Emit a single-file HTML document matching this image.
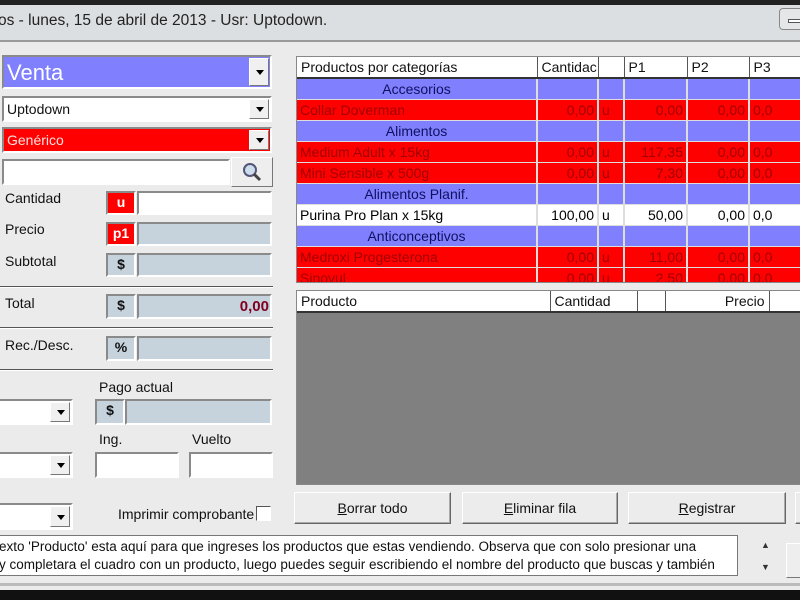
<!DOCTYPE html>
<html><head><meta charset="utf-8"><style>
*{margin:0;padding:0;box-sizing:border-box}
body{width:800px;height:600px;overflow:hidden;background:#ebebeb;font-family:"Liberation Sans",sans-serif;font-size:14px;color:#111;position:relative}
.a{position:absolute}
.in{position:absolute;border:2px solid;border-color:#8a8a8a #fff #fff #8a8a8a;background:#fff}
.dd{position:absolute;top:1px;right:1px;bottom:1px;width:20px;background:#f0f0f0;border:1px solid;border-color:#fff #777 #777 #fff}
.dd:after{content:"";position:absolute;left:6px;top:50%;margin-top:-2px;border:4px solid transparent;border-top:5px solid #000;border-bottom:0}
.bx{position:absolute;border:2px solid;border-color:#8a8a8a #fff #fff #8a8a8a;font-weight:bold;text-align:center;line-height:19px}
.hr{position:absolute;left:0;width:273px;height:2px;background:#555;border-bottom:1px solid #fff}
.lb{position:absolute;font-size:14px}
table{border-collapse:collapse;font-size:14px}
td{height:21px;padding:0 3px;border-right:2px solid #ddd;border-bottom:1px solid #ddd;white-space:nowrap;overflow:hidden}
.c td{background:#8080ff;color:#101060}
.r td{background:#f00;color:#a00000}
.w td{background:#fff;color:#000}
.n{text-align:right}
th{height:21px;font-weight:normal;text-align:left;padding:0 4px;background:#fff;border-right:1px solid #555;border-bottom:2px solid #333}
.btn{position:absolute;top:492px;height:32px;background:#ececec;border:1px solid;border-color:#fff #666 #666 #fff;box-shadow:inset -1px -1px #aaa;text-align:center;line-height:30px;font-size:14px}
</style></head><body>
<div class="a" style="left:0;top:0;width:800px;height:5px;background:#222"></div>
<div class="a" style="left:0;top:5px;width:800px;height:37px;background:#dcdfe1;border-bottom:2px solid #9a9a9a"></div>
<div class="a" style="left:-2px;top:12px;font-size:15.5px;color:#222">os - lunes, 15 de abril de 2013 - Usr: Uptodown.</div>
<div class="a" style="left:779px;top:8px;width:30px;height:22px;border:1px solid #888;border-radius:4px;background:#e4e6e8"><div class="a" style="left:8px;top:10px;width:14px;height:4px;border:1px solid #555;background:#fff"></div></div>

<div class="in" style="left:2px;top:55px;width:270px;height:34px;background:#8080ff"><span class="a" style="left:3px;top:3px;font-size:22px;color:#fff">Venta</span><div class="dd"></div></div>
<div class="in" style="left:2px;top:96px;width:270px;height:26px"><span class="a" style="left:3px;top:3px">Uptodown</span><div class="dd"></div></div>
<div class="in" style="left:2px;top:127px;width:270px;height:26px;background:#f00"><span class="a" style="left:3px;top:3px;color:#ffe0e0">Genérico</span><div class="dd"></div></div>
<div class="in" style="left:2px;top:159px;width:228px;height:26px"></div>
<div class="a" style="left:231px;top:157px;width:42px;height:30px;background:#eee;border:1px solid;border-color:#fff #777 #777 #fff">
<svg width="40" height="28"><circle cx="18" cy="12" r="6" fill="#cde" stroke="#557" stroke-width="2"/><line x1="22" y1="16" x2="28" y2="22" stroke="#444" stroke-width="3"/></svg></div>

<div class="lb" style="left:5px;top:190px">Cantidad</div>
<div class="bx" style="left:106px;top:191px;width:30px;height:24px;background:#f00;color:#fff">u</div>
<div class="in" style="left:137px;top:191px;width:135px;height:24px"></div>
<div class="lb" style="left:5px;top:221px">Precio</div>
<div class="bx" style="left:106px;top:222px;width:30px;height:24px;background:#f00;color:#fff">p1</div>
<div class="in" style="left:137px;top:222px;width:135px;height:24px;background:#c6d3dd"></div>
<div class="lb" style="left:5px;top:253px">Subtotal</div>
<div class="bx" style="left:106px;top:253px;width:30px;height:24px;background:#c6d3dd">$</div>
<div class="in" style="left:137px;top:253px;width:135px;height:24px;background:#c6d3dd"></div>
<div class="hr" style="top:286px"></div>
<div class="lb" style="left:5px;top:295px">Total</div>
<div class="bx" style="left:106px;top:294px;width:30px;height:25px;background:#c6d3dd">$</div>
<div class="in" style="left:137px;top:294px;width:135px;height:25px;background:#c6d3dd"><span class="a" style="right:1px;top:2px;font-weight:bold;color:#800020;font-size:15px">0,00</span></div>
<div class="hr" style="top:327px"></div>
<div class="lb" style="left:5px;top:337px">Rec./Desc.</div>
<div class="bx" style="left:106px;top:336px;width:30px;height:25px;background:#c6d3dd">%</div>
<div class="in" style="left:137px;top:336px;width:135px;height:25px;background:#c6d3dd"></div>
<div class="hr" style="top:369px"></div>
<div class="lb" style="left:99px;top:379px">Pago actual</div>
<div class="in" style="left:-4px;top:399px;width:77px;height:26px"><div class="dd"></div></div>
<div class="bx" style="left:95px;top:399px;width:30px;height:26px;background:#c6d3dd">$</div>
<div class="in" style="left:125px;top:399px;width:147px;height:26px;background:#c6d3dd"></div>
<div class="lb" style="left:99px;top:431px">Ing.</div>
<div class="lb" style="left:192px;top:431px">Vuelto</div>
<div class="in" style="left:-4px;top:452px;width:77px;height:26px"><div class="dd"></div></div>
<div class="in" style="left:95px;top:452px;width:84px;height:26px"></div>
<div class="in" style="left:189px;top:452px;width:84px;height:26px"></div>
<div class="in" style="left:-4px;top:503px;width:77px;height:27px"><div class="dd"></div></div>
<div class="lb" style="left:118px;top:506px">Imprimir comprobante</div>
<div class="a" style="left:256px;top:506px;width:15px;height:15px;border:1px solid #555;border-right-color:#fff;border-bottom-color:#fff;background:#fff"></div>

<div class="a" style="left:296px;top:56px;width:510px;height:227px;border:1px solid #888;background:#ececec;overflow:hidden">
<table style="width:520px;table-layout:fixed">
<colgroup><col style="width:240px"><col style="width:61px"><col style="width:26px"><col style="width:63px"><col style="width:62px"><col style="width:68px"></colgroup>
<tr><th>Productos por categorías</th><th>Cantidac</th><th></th><th>P1</th><th>P2</th><th>P3</th></tr>
<tr class="c"><td style="text-align:center">Accesorios</td><td></td><td></td><td></td><td></td><td></td></tr>
<tr class="r"><td>Collar Doverman</td><td class="n">0,00</td><td>u</td><td class="n">0,00</td><td class="n">0,00</td><td>0,0</td></tr>
<tr class="c"><td style="text-align:center">Alimentos</td><td></td><td></td><td></td><td></td><td></td></tr>
<tr class="r"><td>Medium Adult x 15kg</td><td class="n">0,00</td><td>u</td><td class="n">117,35</td><td class="n">0,00</td><td>0,0</td></tr>
<tr class="r"><td>Mini Sensible x 500g</td><td class="n">0,00</td><td>u</td><td class="n">7,30</td><td class="n">0,00</td><td>0,0</td></tr>
<tr class="c"><td style="text-align:center">Alimentos Planif.</td><td></td><td></td><td></td><td></td><td></td></tr>
<tr class="w"><td>Purina Pro Plan x 15kg</td><td class="n">100,00</td><td>u</td><td class="n">50,00</td><td class="n">0,00</td><td>0,0</td></tr>
<tr class="c"><td style="text-align:center">Anticonceptivos</td><td></td><td></td><td></td><td></td><td></td></tr>
<tr class="r"><td>Medroxi Progesterona</td><td class="n">0,00</td><td>u</td><td class="n">11,00</td><td class="n">0,00</td><td>0,0</td></tr>
<tr class="r"><td>Sinovul</td><td class="n">0,00</td><td>u</td><td class="n">2,50</td><td class="n">0,00</td><td>0,0</td></tr>
</table></div>

<div class="a" style="left:296px;top:290px;width:510px;height:195px;border:1px solid #888;background:#808080;overflow:hidden">
<table style="width:520px;table-layout:fixed">
<colgroup><col style="width:253px"><col style="width:87px"><col style="width:28px"><col style="width:104px"><col style="width:48px"></colgroup>
<tr><th>Producto</th><th>Cantidad</th><th></th><th style="text-align:right">Precio</th><th></th></tr>
</table></div>

<div class="btn" style="left:294px;width:157px"><u>B</u>orrar todo</div>
<div class="btn" style="left:462px;width:156px"><u>E</u>liminar fila</div>
<div class="btn" style="left:628px;width:158px"><u>R</u>egistrar</div>
<div class="btn" style="left:795px;width:20px"></div>

<div class="a" style="left:-2px;top:535px;width:740px;height:41px;background:#fff;border:1px solid #777;font-size:13.5px;line-height:18px;padding:2px 0 0 0;white-space:nowrap;overflow:hidden">exto 'Producto' esta aquí para que ingreses los productos que estas vendiendo. Observa que con solo presionar una<br>y completara el cuadro con un producto, luego puedes seguir escribiendo el nombre del producto que buscas y también</div>
<div class="a" style="left:761px;top:540px;font-size:9px;color:#333">▲</div>
<div class="a" style="left:761px;top:562px;font-size:9px;color:#333">▼</div>
<div class="a" style="left:786px;top:543px;width:20px;height:35px;background:#eee;border:1px solid;border-color:#fff #777 #777 #fff"></div>
<div class="a" style="left:0;top:583px;width:800px;height:3px;background:#bbb"></div>
<div class="a" style="left:0;top:590px;width:800px;height:10px;background:#111"></div>
</body></html>
